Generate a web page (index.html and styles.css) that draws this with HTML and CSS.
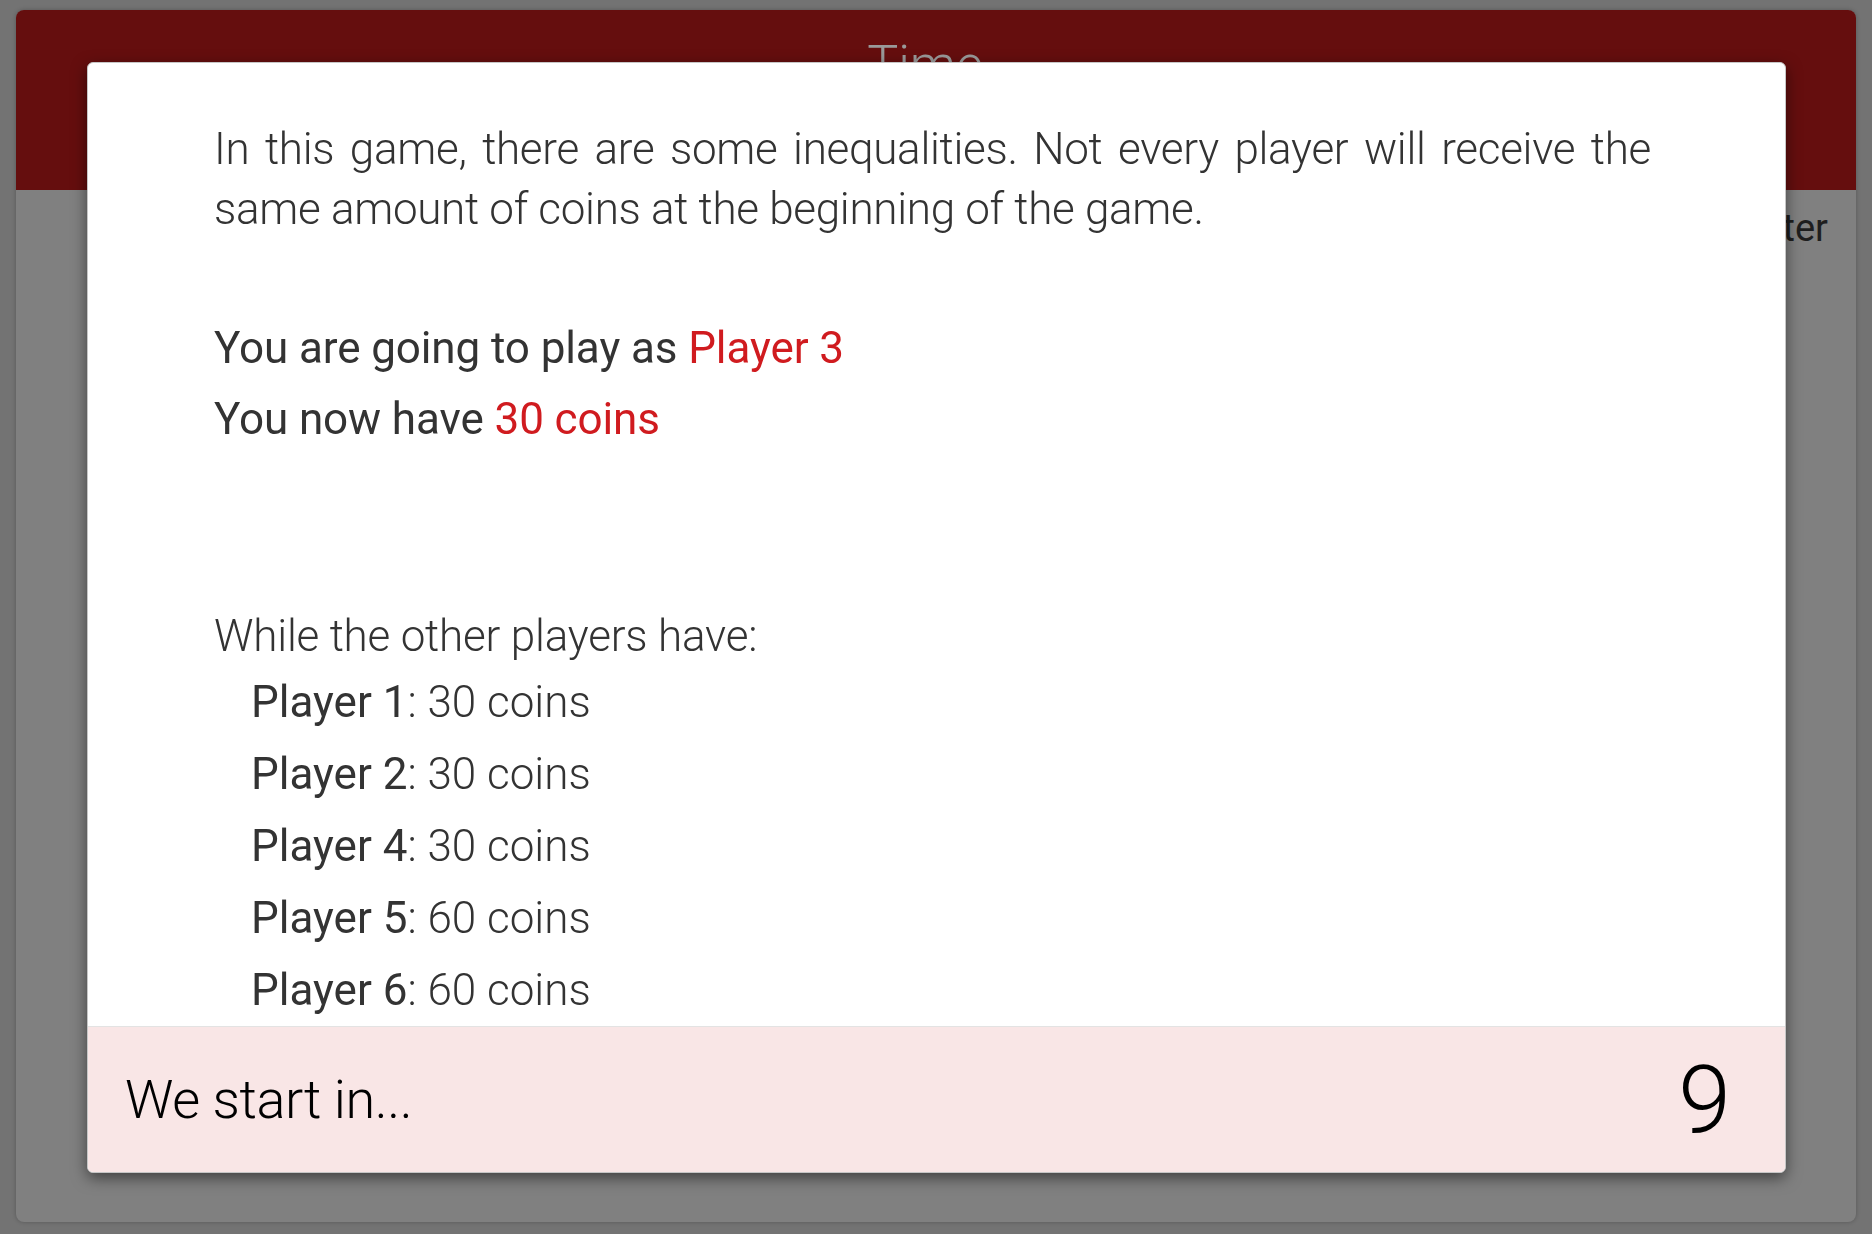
FILE: index.html
```html
<!DOCTYPE html>
<html lang="en">
<head>
<meta charset="utf-8">
<title>We start in...</title>
<link rel="stylesheet" href="styles.css">
</head>
<body>
  <div class="page">
    <div class="card">
      <header class="card-head">
        <h1 class="title">Time</h1>
      </header>
      <div class="card-sub">
        <span class="counter">Counter</span>
      </div>
    </div>
  </div>

  <div class="modal">
    <div class="modal-dialog">
      <div class="modal-body">
        <p class="intro">In this game, there are some inequalities. Not every player will receive the same amount of coins at the beginning of the game.</p>
        <div class="you">
          <p class="you-line">You are going to play as <span class="hl">Player 3</span></p>
          <p class="you-line">You now have <span class="hl">30 coins</span></p>
        </div>
        <p class="others">While the other players have:</p>
        <ul class="players">
          <li><b>Player 1</b>: 30 coins</li>
          <li><b>Player 2</b>: 30 coins</li>
          <li><b>Player 4</b>: 30 coins</li>
          <li><b>Player 5</b>: 60 coins</li>
          <li><b>Player 6</b>: 60 coins</li>
        </ul>
      </div>
      <div class="modal-footer">
        <span class="start">We start in...</span>
        <span class="count">9</span>
      </div>
    </div>
  </div>
</body>
</html>
```

FILE: styles.css
```css
* { box-sizing: border-box; }

html, body {
  margin: 0;
  padding: 0;
}

body {
  background: #737373;
  font-family: Roboto, "Liberation Sans", Arial, sans-serif;
  height: 1234px;
  overflow: hidden;
}

.page {
  padding: 10px 16px 12px;
  height: 1234px;
}

.card {
  height: 1212px;
  background: #808080;
  border-radius: 8px;
  box-shadow: 0 0 4px rgba(0, 0, 0, 0.25);
  overflow: hidden;
}

.card-head {
  height: 180px;
  background: #650e0e;
  padding-top: 29px;
  text-align: center;
}

.title {
  margin: 0 0 0 -22px;
  font-size: 52px;
  line-height: 52px;
  font-weight: 300;
  color: #9a9a9a;
}

.card-sub {
  padding: 14px 28px 0;
  text-align: right;
}

.counter {
  font-size: 38px;
  line-height: 48px;
  font-weight: 400;
  color: #1e1e1e;
}

/* modal */
.modal {
  position: fixed;
  inset: 0;
}

.modal-dialog {
  width: 1699px;
  margin: 62px 0 0 87px;
  background: #fff;
  border: 1px solid #c6c6c6;
  border-radius: 6px;
  box-shadow: 0 5px 15px rgba(0, 0, 0, 0.5);
  overflow: hidden;
}

.modal-body {
  height: 963px;
  padding: 56px 134px 0 126px;
  color: #333;
}

.intro {
  margin: 0 0 74px;
  font-size: 44px;
  line-height: 60px;
  font-weight: 300;
  letter-spacing: -0.3px;
  text-align: justify;
}

.you-line {
  margin: 0;
  font-size: 44px;
  line-height: 71px;
  font-weight: 400;
  letter-spacing: -0.1px;
}

.hl {
  color: #d01b1f;
}

.others {
  margin: 151px 0 0;
  font-size: 44px;
  line-height: 60px;
  font-weight: 300;
  letter-spacing: -0.2px;
}

.players {
  list-style: none;
  margin: 0;
  padding: 0 0 0 37px;
}

.players li {
  font-size: 44px;
  line-height: 72px;
  font-weight: 300;
}

.players b {
  font-weight: 400;
}

.modal-footer {
  height: 146px;
  border-top: 1px solid #e3e3e3;
  background: #f9e6e6;
  display: flex;
  align-items: center;
  justify-content: space-between;
  padding: 0 54px 0 37px;
  color: #000;
}

.start {
  font-size: 54px;
  font-weight: 300;
  letter-spacing: -0.4px;
}

.count {
  font-size: 95px;
  font-weight: 300;
  line-height: 1;
}
```
